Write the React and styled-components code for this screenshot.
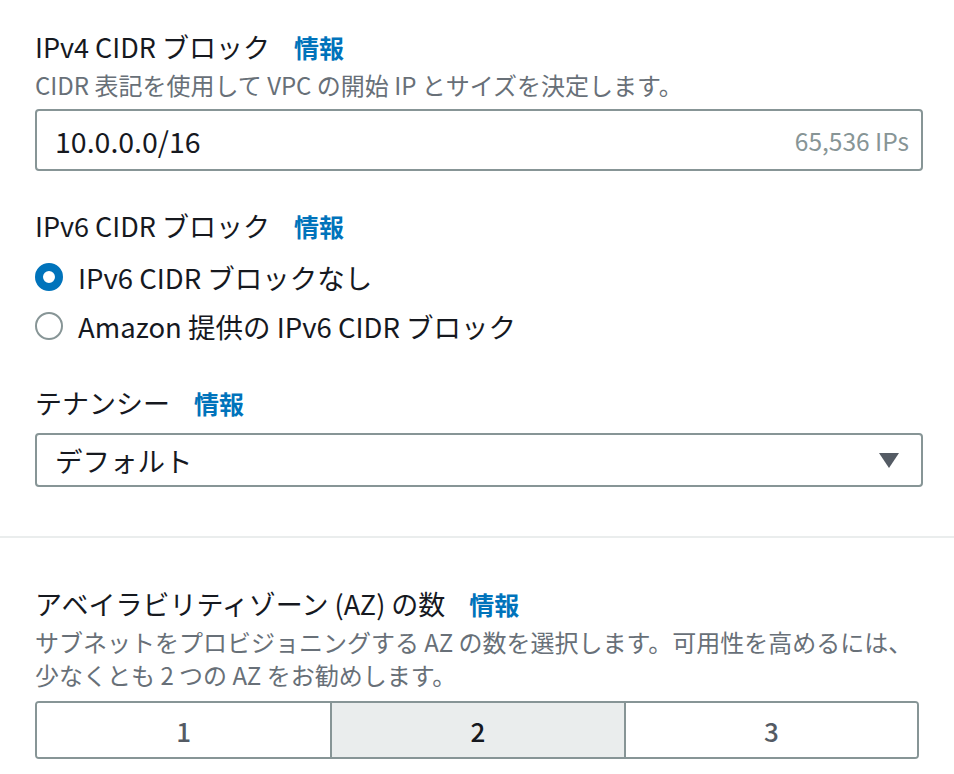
import React, { useState } from 'react';
import styled, { createGlobalStyle } from 'styled-components';

const GlobalStyle = createGlobalStyle`
  html, body {
    margin: 0;
    padding: 0;
    background: #ffffff;
  }
  body {
    font-family: "Noto Sans CJK JP", "Noto Sans", sans-serif;
    color: #16191f;
  }
`;

const Page = styled.div`
  width: 954px;
  padding-top: 29px;
`;

const Section = styled.div`
  padding: 0 31px 0 35px;
`;

const Field = styled.div`
  margin-bottom: ${(p) => p.$gap || 0}px;
`;

const LabelRow = styled.div`
  display: flex;
  align-items: center;
  gap: 24px;
  height: 36px;
  line-height: 36px;
`;

const LabelText = styled.span`
  font-size: 27px;
  color: #16191f;
`;

const InfoLink = styled.a`
  color: #0073bb;
  font-weight: 700;
  font-size: 25px;
  text-decoration: none;
  cursor: pointer;
`;

const Description = styled.div`
  margin-top: 3px;
  font-size: 24px;
  line-height: 33px;
  color: #687078;
`;

const TextInput = styled.div`
  box-sizing: border-box;
  height: 62px;
  margin-top: 8px;
  border: 2px solid #879596;
  border-radius: 4px;
  display: flex;
  align-items: center;
  justify-content: space-between;
  padding: 0 12px 0 18px;
`;

const InputValue = styled.span`
  font-size: 28.5px;
  color: #16191f;
`;

const Suffix = styled.span`
  font-size: 24.5px;
  color: #879596;
`;

const RadioGroup = styled.div`
  display: flex;
  flex-direction: column;
  gap: 13px;
  margin-top: 15px;
`;

const RadioRow = styled.label`
  display: flex;
  align-items: center;
  gap: 15px;
  height: 36px;
  font-size: 27.5px;
  line-height: 36px;
  cursor: pointer;
`;

const RadioDot = styled.span`
  box-sizing: border-box;
  width: 28px;
  height: 28px;
  border-radius: 50%;
  flex: none;
  background: #ffffff;
  border: ${(p) => (p.$checked ? '8px solid #0073bb' : '2px solid #879596')};
`;

const Select = styled.div`
  box-sizing: border-box;
  height: 54px;
  margin-top: 12px;
  border: 2px solid #879596;
  border-radius: 4px;
  display: flex;
  align-items: center;
  justify-content: space-between;
  padding: 0 22px 0 18px;
  font-size: 27.5px;
  cursor: pointer;
`;

const Caret = styled.span`
  width: 0;
  height: 0;
  border-left: 10px solid transparent;
  border-right: 10px solid transparent;
  border-top: 15px solid #545b64;
`;

const Divider = styled.div`
  height: 2px;
  background: #eaeded;
  margin: 49px 0 48px;
`;

const Segmented = styled.div`
  box-sizing: border-box;
  display: grid;
  grid-template-columns: repeat(3, 1fr);
  width: 884px;
  height: 58px;
  margin-top: 10px;
  border: 2px solid #879596;
  border-radius: 4px;
  overflow: hidden;
`;

const Segment = styled.button`
  border: none;
  border-left: ${(p) => (p.$first ? 'none' : '2px solid #879596')};
  background: ${(p) => (p.$active ? '#eaeded' : '#ffffff')};
  color: ${(p) => (p.$active ? '#16191f' : '#545b64')};
  font-family: inherit;
  font-size: 26px;
  font-weight: 500;
  cursor: pointer;
  padding: 0;
`;

export default function App() {
  const [ipv6, setIpv6] = useState('none');
  const [az, setAz] = useState(2);

  return (
    <Page>
      <GlobalStyle />
      <Section>
        <Field $gap={37}>
          <LabelRow>
            <LabelText>IPv4 CIDR ブロック</LabelText>
            <InfoLink>情報</InfoLink>
          </LabelRow>
          <Description>CIDR 表記を使用して VPC の開始 IP とサイズを決定します。</Description>
          <TextInput>
            <InputValue>10.0.0.0/16</InputValue>
            <Suffix>65,536 IPs</Suffix>
          </TextInput>
        </Field>

        <Field $gap={41}>
          <LabelRow>
            <LabelText>IPv6 CIDR ブロック</LabelText>
            <InfoLink>情報</InfoLink>
          </LabelRow>
          <RadioGroup>
            <RadioRow onClick={() => setIpv6('none')}>
              <RadioDot $checked={ipv6 === 'none'} />
              IPv6 CIDR ブロックなし
            </RadioRow>
            <RadioRow onClick={() => setIpv6('amazon')}>
              <RadioDot $checked={ipv6 === 'amazon'} />
              Amazon 提供の IPv6 CIDR ブロック
            </RadioRow>
          </RadioGroup>
        </Field>

        <Field>
          <LabelRow>
            <LabelText>テナンシー</LabelText>
            <InfoLink>情報</InfoLink>
          </LabelRow>
          <Select>
            デフォルト
            <Caret />
          </Select>
        </Field>
      </Section>

      <Divider />

      <Section>
        <Field>
          <LabelRow>
            <LabelText>アベイラビリティゾーン (AZ) の数</LabelText>
            <InfoLink>情報</InfoLink>
          </LabelRow>
          <Description>
            サブネットをプロビジョニングする AZ の数を選択します。可用性を高めるには、
            <br />
            少なくとも 2 つの AZ をお勧めします。
          </Description>
          <Segmented>
            {[1, 2, 3].map((n, i) => (
              <Segment key={n} $first={i === 0} $active={az === n} onClick={() => setAz(n)}>
                {n}
              </Segment>
            ))}
          </Segmented>
        </Field>
      </Section>
    </Page>
  );
}
